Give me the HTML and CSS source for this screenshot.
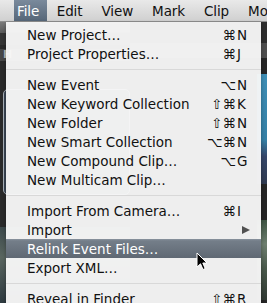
FILE: index.html
```html
<!DOCTYPE html>
<html lang="en">
<head>
    <meta charset="UTF-8">
    <meta name="viewport" content="width=device-width, initial-scale=1.0">
    <title>File menu</title>
    <link rel="stylesheet" href="styles.css">
</head>
<body>
    <div class="menubar">
        <span class="menu-title active">File</span>
        <span class="menu-title">Edit</span>
        <span class="menu-title">View</span>
        <span class="menu-title">Mark</span>
        <span class="menu-title">Clip</span>
        <span class="menu-title">Modify</span>
    </div>

    <!-- app window behind the menu, only the edges show -->
    <div class="app">
        <div class="sidebar">
            <div class="side-tools"></div>
            <div class="side-head">H</div>
            <div class="side-card"></div>
            <div class="side-photo"></div>
        </div>
        <div class="browser">
            <div class="browser-tools"></div>
            <div class="browser-bar"></div>
            <div class="thumb-row"><div class="thumb water"></div></div>
            <div class="thumb-row"><div class="thumb forest"></div></div>
        </div>
    </div>

    <div class="menu">
        <div class="item"><span class="label">New Project…</span><span class="mods">⌘</span><span class="key">N</span></div>
        <div class="item"><span class="label">Project Properties…</span><span class="mods">⌘</span><span class="key">J</span></div>
        <div class="sep"></div>
        <div class="item"><span class="label">New Event</span><span class="mods">⌥</span><span class="key">N</span></div>
        <div class="item"><span class="label">New Keyword Collection</span><span class="mods">⇧⌘</span><span class="key">K</span></div>
        <div class="item"><span class="label">New Folder</span><span class="mods">⇧⌘</span><span class="key">N</span></div>
        <div class="item"><span class="label">New Smart Collection</span><span class="mods">⌥⌘</span><span class="key">N</span></div>
        <div class="item"><span class="label">New Compound Clip…</span><span class="mods">⌥</span><span class="key">G</span></div>
        <div class="item"><span class="label">New Multicam Clip…</span></div>
        <div class="sep"></div>
        <div class="item"><span class="label">Import From Camera…</span><span class="mods">⌘</span><span class="key">I</span></div>
        <div class="item"><span class="label">Import</span><span class="arrow"></span></div>
        <div class="item selected"><span class="label">Relink Event Files…</span></div>
        <div class="item"><span class="label">Export XML…</span></div>
        <div class="sep"></div>
        <div class="item"><span class="label">Reveal in Finder</span><span class="mods">⇧⌘</span><span class="key">R</span></div>
    </div>

    <svg class="cursor" width="12" height="19" viewBox="0 0 12 19">
        <path d="M1 1 L1 15 L4.5 11.8 L7 17.5 L9.2 16.5 L6.8 11 L11 11 Z" fill="#000" stroke="#fff" stroke-width="1" stroke-linejoin="round"/>
    </svg>
</body>
</html>
```

FILE: styles.css
```css
body {
    margin: 0;
    width: 267px;
    height: 303px;
    overflow: hidden;
    background: #262626;
    font-family: 'DejaVu Sans', 'Liberation Sans', sans-serif;
    position: relative;
}

.menubar {
    height: 21px;
    border-bottom: 1px solid #8e8e8e;
    background: linear-gradient(#e9e9e9, #d0d0d0);
    display: flex;
    align-items: stretch;
    padding-left: 14px;
    white-space: nowrap;
    overflow: hidden;
    font-size: 13.5px;
    letter-spacing: -0.1px;
    color: #111;
}

.menu-title {
    display: flex;
    align-items: center;
    padding: 0 9.5px;
}

.menu-title.active {
    padding: 0 8px 0 3px;
    color: #fff;
    background: linear-gradient(#7a8a9c, #566678);
}

.app {
    display: flex;
    height: 281px;
}

.sidebar {
    width: 130px;
    display: flex;
    flex-direction: column;
    background: #2a2a2a;
}

.side-tools {
    height: 11px;
    background: linear-gradient(#7a7a7a, #5a5a5a);
    border-bottom: 12px solid #353535;
}

.side-head {
    height: 12px;
    margin-top: 4px;
    padding-left: 3px;
    background: #474747;
    color: #bdbdbd;
    font-size: 11px;
    line-height: 12px;
    font-weight: bold;
}

.side-card {
    height: 104px;
    margin: 28px 0 0 3px;
    border: 1px solid #a9b2bb;
    border-radius: 5px;
    background: #3b4654;
}

.side-photo {
    flex: 1;
    margin-top: 32px;
    background: linear-gradient(#3d4a4c, #5a6660 40%, #2e3a40);
}

.browser {
    flex: 1;
    display: flex;
    flex-direction: column;
    background: #252525;
}

.browser-tools {
    height: 21px;
    background: #2e2e2e;
}

.browser-bar {
    height: 15px;
    background: #4e4e4e;
    margin-bottom: 16px;
}

.thumb-row {
    display: flex;
    justify-content: flex-end;
}

.thumb {
    width: 10px;
}

.water {
    height: 110px;
    background: linear-gradient(#3f8fb6, #3580a6 60%, #36476a 75%, #2f3a50);
}

.forest {
    height: 80px;
    margin-top: 36px;
    background: linear-gradient(#3d5442, #6e7f70 30%, #4a5a4c 60%, #303a33);
}

.menu {
    position: absolute;
    left: 6px;
    top: 22px;
    width: 255px;
    padding-top: 3px;
    background: rgba(247, 247, 247, 0.96);
    box-shadow: 0 2px 4px rgba(0, 0, 0, 0.35);
    font-size: 13.5px;
    color: #111;
}

.item {
    height: 19px;
    display: flex;
    align-items: center;
    padding: 0 14px 0 21px;
    white-space: nowrap;
}

.label {
    flex: 1;
}

.mods {
    text-align: right;
}

.key {
    width: 10px;
    margin-left: 1px;
}

.arrow {
    width: 0;
    height: 0;
    margin-right: -3px;
    border-top: 4.5px solid transparent;
    border-bottom: 4.5px solid transparent;
    border-left: 8px solid #505050;
}

.item.selected {
    color: #fff;
    background: linear-gradient(#8a949f, #747e89 10%, #5f6873);
}

.sep {
    height: 12px;
    display: flex;
    align-items: center;
}

.sep::before {
    content: '';
    flex: 1;
    height: 1px;
    background: #d8d8d8;
}

.cursor {
    position: absolute;
    left: 196px;
    top: 252px;
}
```
